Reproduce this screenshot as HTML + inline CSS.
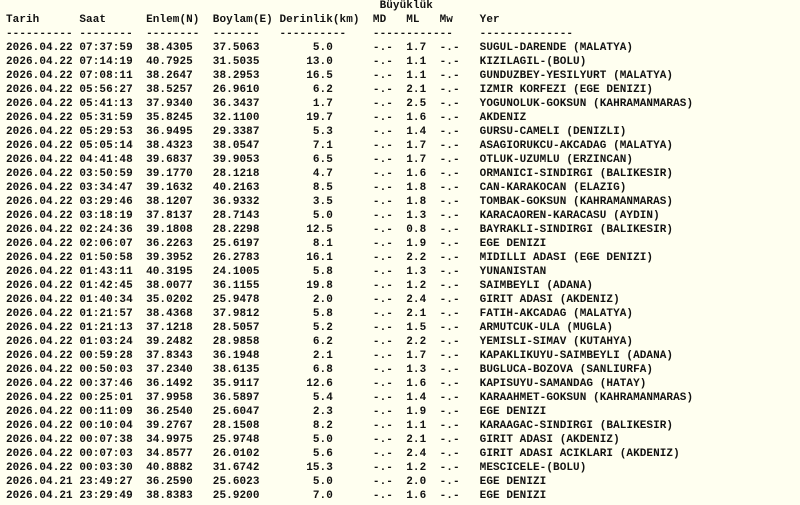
<!DOCTYPE html>
<html><head><meta charset="utf-8"><style>
html,body{margin:0;padding:0;background:#fffff0;width:800px;height:505px;overflow:hidden}
pre{margin:0;position:absolute;left:6px;top:-1px;font-family:"Liberation Mono",monospace;font-size:11px;line-height:14px;letter-spacing:0.07px;font-weight:bold;color:#111}
</style></head><body><pre>                                                        Büyüklük
Tarih      Saat      Enlem(N)  Boylam(E) Derinlik(km)  MD   ML   Mw    Yer
---------- --------  --------  -------   ----------    ------------    --------------
2026.04.22 07:37:59  38.4305   37.5063        5.0      -.-  1.7  -.-   SUGUL-DARENDE (MALATYA)
2026.04.22 07:14:19  40.7925   31.5035       13.0      -.-  1.1  -.-   KIZILAGIL-(BOLU)
2026.04.22 07:08:11  38.2647   38.2953       16.5      -.-  1.1  -.-   GUNDUZBEY-YESILYURT (MALATYA)
2026.04.22 05:56:27  38.5257   26.9610        6.2      -.-  2.1  -.-   IZMIR KORFEZI (EGE DENIZI)
2026.04.22 05:41:13  37.9340   36.3437        1.7      -.-  2.5  -.-   YOGUNOLUK-GOKSUN (KAHRAMANMARAS)
2026.04.22 05:31:59  35.8245   32.1100       19.7      -.-  1.6  -.-   AKDENIZ
2026.04.22 05:29:53  36.9495   29.3387        5.3      -.-  1.4  -.-   GURSU-CAMELI (DENIZLI)
2026.04.22 05:05:14  38.4323   38.0547        7.1      -.-  1.7  -.-   ASAGIORUKCU-AKCADAG (MALATYA)
2026.04.22 04:41:48  39.6837   39.9053        6.5      -.-  1.7  -.-   OTLUK-UZUMLU (ERZINCAN)
2026.04.22 03:50:59  39.1770   28.1218        4.7      -.-  1.6  -.-   ORMANICI-SINDIRGI (BALIKESIR)
2026.04.22 03:34:47  39.1632   40.2163        8.5      -.-  1.8  -.-   CAN-KARAKOCAN (ELAZIG)
2026.04.22 03:29:46  38.1207   36.9332        3.5      -.-  1.8  -.-   TOMBAK-GOKSUN (KAHRAMANMARAS)
2026.04.22 03:18:19  37.8137   28.7143        5.0      -.-  1.3  -.-   KARACAOREN-KARACASU (AYDIN)
2026.04.22 02:24:36  39.1808   28.2298       12.5      -.-  0.8  -.-   BAYRAKLI-SINDIRGI (BALIKESIR)
2026.04.22 02:06:07  36.2263   25.6197        8.1      -.-  1.9  -.-   EGE DENIZI
2026.04.22 01:50:58  39.3952   26.2783       16.1      -.-  2.2  -.-   MIDILLI ADASI (EGE DENIZI)
2026.04.22 01:43:11  40.3195   24.1005        5.8      -.-  1.3  -.-   YUNANISTAN
2026.04.22 01:42:45  38.0077   36.1155       19.8      -.-  1.2  -.-   SAIMBEYLI (ADANA)
2026.04.22 01:40:34  35.0202   25.9478        2.0      -.-  2.4  -.-   GIRIT ADASI (AKDENIZ)
2026.04.22 01:21:57  38.4368   37.9812        5.8      -.-  2.1  -.-   FATIH-AKCADAG (MALATYA)
2026.04.22 01:21:13  37.1218   28.5057        5.2      -.-  1.5  -.-   ARMUTCUK-ULA (MUGLA)
2026.04.22 01:03:24  39.2482   28.9858        6.2      -.-  2.2  -.-   YEMISLI-SIMAV (KUTAHYA)
2026.04.22 00:59:28  37.8343   36.1948        2.1      -.-  1.7  -.-   KAPAKLIKUYU-SAIMBEYLI (ADANA)
2026.04.22 00:50:03  37.2340   38.6135        6.8      -.-  1.3  -.-   BUGLUCA-BOZOVA (SANLIURFA)
2026.04.22 00:37:46  36.1492   35.9117       12.6      -.-  1.6  -.-   KAPISUYU-SAMANDAG (HATAY)
2026.04.22 00:25:01  37.9958   36.5897        5.4      -.-  1.4  -.-   KARAAHMET-GOKSUN (KAHRAMANMARAS)
2026.04.22 00:11:09  36.2540   25.6047        2.3      -.-  1.9  -.-   EGE DENIZI
2026.04.22 00:10:04  39.2767   28.1508        8.2      -.-  1.1  -.-   KARAAGAC-SINDIRGI (BALIKESIR)
2026.04.22 00:07:38  34.9975   25.9748        5.0      -.-  2.1  -.-   GIRIT ADASI (AKDENIZ)
2026.04.22 00:07:03  34.8577   26.0102        5.6      -.-  2.4  -.-   GIRIT ADASI ACIKLARI (AKDENIZ)
2026.04.22 00:03:30  40.8882   31.6742       15.3      -.-  1.2  -.-   MESCICELE-(BOLU)
2026.04.21 23:49:27  36.2590   25.6023        5.0      -.-  2.0  -.-   EGE DENIZI
2026.04.21 23:29:49  38.8383   25.9200        7.0      -.-  1.6  -.-   EGE DENIZI
</pre></body></html>
